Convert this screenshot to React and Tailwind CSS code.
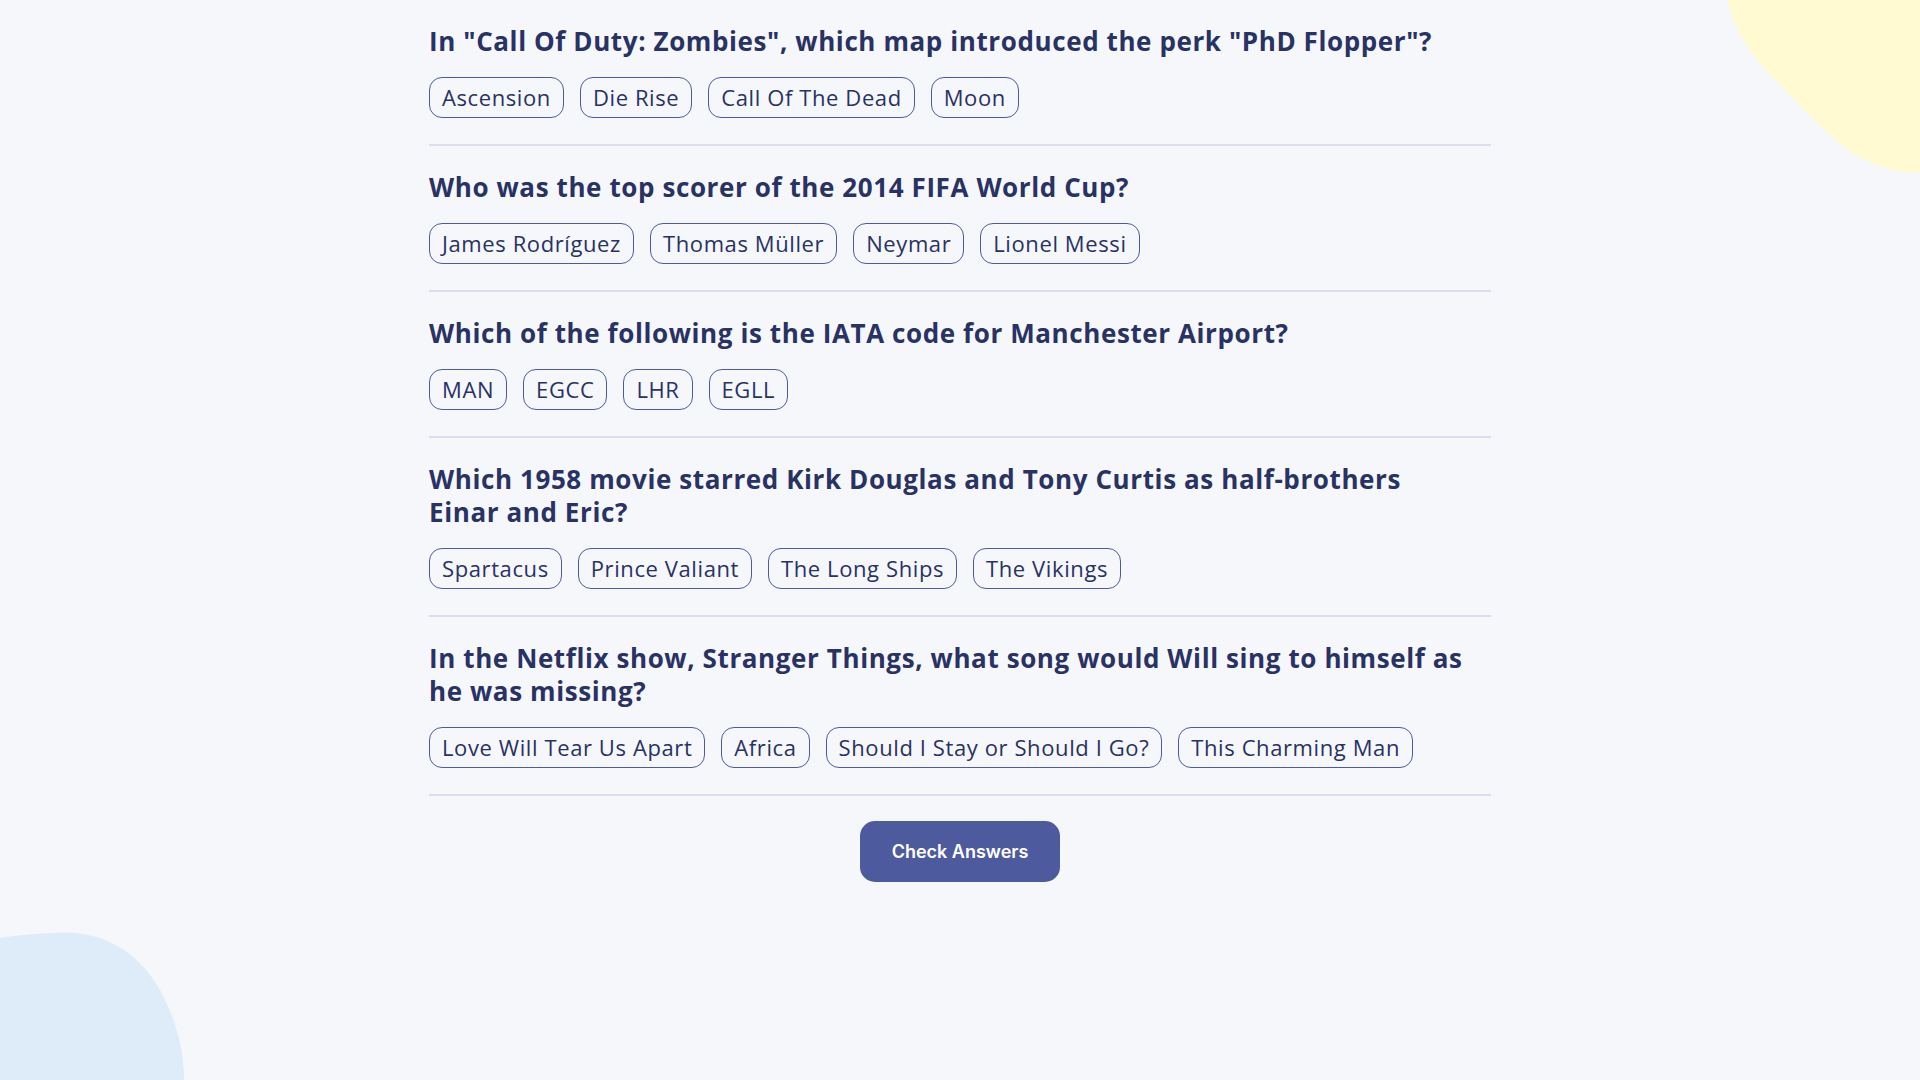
import React from 'react';

const questions = [
  { q: 'In "Call Of Duty: Zombies", which map introduced the perk "PhD Flopper"?', a: ['Ascension', 'Die Rise', 'Call Of The Dead', 'Moon'] },
  { q: 'Who was the top scorer of the 2014 FIFA World Cup?', a: ['James Rodríguez', 'Thomas Müller', 'Neymar', 'Lionel Messi'] },
  { q: 'Which of the following is the IATA code for Manchester Airport?', a: ['MAN', 'EGCC', 'LHR', 'EGLL'] },
  { q: 'Which 1958 movie starred Kirk Douglas and Tony Curtis as half-brothers\nEinar and Eric?', a: ['Spartacus', 'Prince Valiant', 'The Long Ships', 'The Vikings'] },
  { q: 'In the Netflix show, Stranger Things, what song would Will sing to himself as he was missing?', a: ['Love Will Tear Us Apart', 'Africa', 'Should I Stay or Should I Go?', 'This Charming Man'] },
];

const Question = ({ q, a }) => (
  <div className="pt-[25px] pb-[26px] border-b-2 border-[#dbdef0]">
    <h2 className="text-[26px] leading-[33px] font-bold tracking-[0.6px] whitespace-pre-line text-[#293264] mb-[19px]">{q}</h2>
    <div className="flex gap-4">
      {a.map((ans) => (
        <button key={ans} className="h-[41px] px-3 pb-[2px] rounded-[13px] border border-[#4d5b9e] text-[22px] tracking-[0.6px] text-[#293264] leading-none">
          {ans}
        </button>
      ))}
    </div>
  </div>
);

export default function App() {
  return (
    <div className="relative min-h-screen overflow-hidden bg-[#f5f7fb]" style={{ fontFamily: '"Open Sans", sans-serif' }}>
      <svg className="absolute top-0 right-0" width="200" height="180" viewBox="0 0 200 180">
        <path d="M7 0 C 14 30, 30 55, 60 85 C 90 115, 115 145, 145 160 C 165 170, 185 173, 200 173 L 200 0 Z" fill="#fffad1" />
      </svg>
      <svg className="absolute bottom-0 left-0" width="190" height="150" viewBox="0 0 190 150">
        <path d="M0 8 C 25 4, 55 2, 75 3 C 110 6, 140 25, 160 60 C 176 90, 184 120, 184 150 L 0 150 Z" fill="#deebf8" />
      </svg>
      <div className="relative mx-auto w-[1062px]">
        {questions.map((item) => (
          <Question key={item.q} {...item} />
        ))}
        <div className="flex justify-center pt-[25px]">
          <button className="w-[200px] h-[61px] rounded-[15px] bg-[#4d5b9e] text-white text-[18px] font-semibold" style={{ fontFamily: 'Inter, sans-serif' }}>
            Check Answers
          </button>
        </div>
      </div>
    </div>
  );
}
